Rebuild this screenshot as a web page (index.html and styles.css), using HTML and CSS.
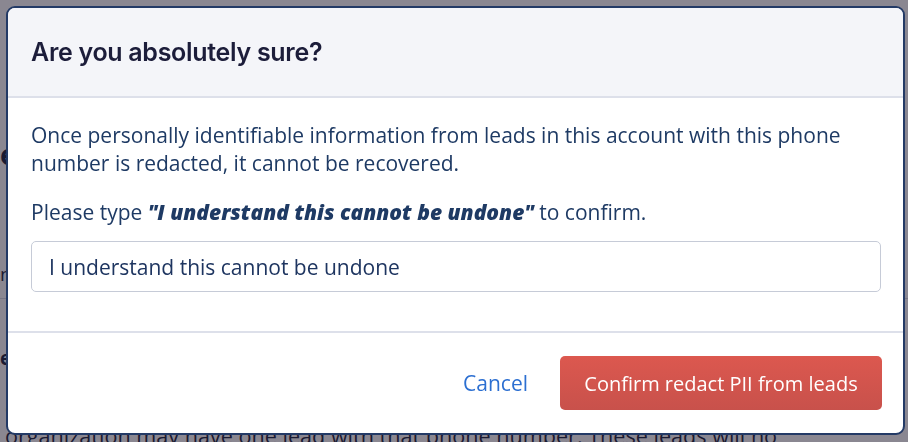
FILE: index.html
```html
<!DOCTYPE html>
<html lang="en">
<head>
<meta charset="utf-8">
<title>Redact PII</title>
<link rel="stylesheet" href="styles.css">
</head>
<body>
<div class="page">
  <h1 class="bg-heading">e</h1>
  <p class="bg-line">n</p>
  <hr class="bg-rule">
  <h3 class="bg-sub">ea</h3>
  <p class="bg-para">e<br>organization may have one lead with that phone number. These leads will no</p>
</div>
<div class="backdrop">
  <div class="modal" role="dialog" aria-labelledby="modal-title">
    <div class="modal-header">
      <h2 class="modal-title" id="modal-title">Are you absolutely sure?</h2>
    </div>
    <div class="modal-body">
      <p class="modal-text">Once personally identifiable information from leads in this account with this phone number is redacted, it cannot be recovered.</p>
      <p class="modal-text modal-prompt">Please type <strong class="phrase">"I understand this cannot be undone"</strong> to confirm.</p>
      <input class="modal-input" type="text" value="I understand this cannot be undone">
    </div>
    <div class="modal-footer">
      <button class="btn-link" type="button">Cancel</button>
      <button class="btn-danger" type="button">Confirm redact PII from leads</button>
    </div>
  </div>
</div>
</body>
</html>
```
FILE: styles.css
```css
* { box-sizing: border-box; }
html, body { margin: 0; padding: 0; }
body {
  width: 908px;
  height: 442px;
  overflow: hidden;
  background: #ffffff;
  font-family: "Open Sans", "Lato", sans-serif;
  color: #1e3a64;
}
.page {
  display: flex;
  flex-direction: column;
  align-items: flex-start;
  white-space: nowrap;
  color: #1f2740;
}
.bg-heading {
  margin: 138px 0 0 0;
  font-size: 28px;
  line-height: 32px;
  font-weight: 700;
}
.bg-line {
  margin: 90px 0 0 0;
  font-size: 19px;
  line-height: 28px;
}
.bg-rule {
  margin: 10px 0 0 0;
  border: 0;
  border-top: 1px solid #d6d9e2;
  width: 100%;
}
.bg-sub {
  margin: 45px 0 0 0;
  font-size: 19px;
  line-height: 28px;
  font-weight: 700;
}
.bg-para {
  margin: 22px 0 0 0;
  padding-left: 5px;
  font-size: 21.6px;
  line-height: 28px;
}
.backdrop {
  position: fixed;
  inset: 0;
  background: rgba(21, 15, 35, 0.5);
  padding: 6px 0 0 6px;
}
.modal {
  width: 899px;
  height: 429px;
  background: #ffffff;
  border: 2px solid #233a66;
  border-radius: 9px;
  overflow: hidden;
  display: flex;
  flex-direction: column;
}
.modal-header {
  height: 90px;
  flex: 0 0 auto;
  background: #f4f5f9;
  border-bottom: 2px solid #dde0ea;
  padding: 0 22px 0 23px;
  display: flex;
  align-items: center;
}
.modal-title {
  margin: 0;
  font-family: "Inter", "Liberation Sans", sans-serif;
  font-weight: 600;
  font-size: 25px;
  letter-spacing: -0.3px;
  color: #1c1d3a;
}
.modal-body {
  flex: 1 1 auto;
  padding: 23px 22px 0 23px;
  display: flex;
  flex-direction: column;
  border-bottom: 2px solid #dde0ea;
}
.modal-text {
  margin: 0;
  font-size: 21px;
  line-height: 28px;
  color: #1e3a64;
}
.modal-prompt {
  margin-top: 21px;
}
.phrase {
  font-style: italic;
  font-weight: 800;
}
.modal-input {
  margin-top: 15px;
  width: 100%;
  height: 51px;
  border: 1px solid #c6cbd7;
  border-radius: 5px;
  padding: 0 17px;
  font-family: "Open Sans", "Lato", sans-serif;
  font-size: 21px;
  color: #1e3560;
  background: #ffffff;
  outline: none;
}
.modal-footer {
  height: 100px;
  flex: 0 0 auto;
  display: flex;
  align-items: center;
  justify-content: flex-end;
  gap: 32px;
  padding: 0 21px 0 23px;
}
.btn-link {
  border: 0;
  background: none;
  padding: 0;
  font-family: "Open Sans", "Lato", sans-serif;
  font-size: 21px;
  color: #2c6fd1;
  cursor: pointer;
}
.btn-danger {
  width: 322px;
  height: 54px;
  border: 0;
  border-radius: 5px;
  background: linear-gradient(#dc584f, #c8514b);
  color: #ffffff;
  font-family: "Open Sans", "Lato", sans-serif;
  font-size: 20px;
  cursor: pointer;
}
```
